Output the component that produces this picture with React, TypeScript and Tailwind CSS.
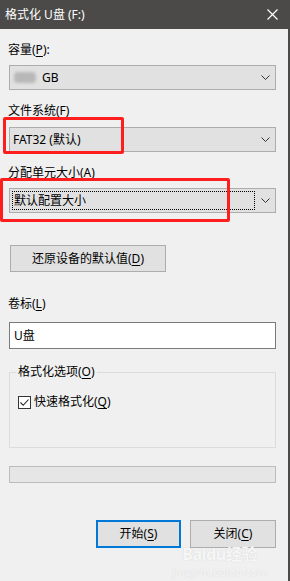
import React from "react";

const font = { fontFamily: '"Noto Sans", "Noto Sans CJK SC", sans-serif' };

function Chevron() {
  return (
    <svg width="9" height="5" viewBox="0 0 9 5" className="shrink-0">
      <path d="M0.5 0.5 L4.5 4.5 L8.5 0.5" fill="none" stroke="#333" strokeWidth="1" />
    </svg>
  );
}

function U({ children }: { children: React.ReactNode }) {
  return <span className="underline underline-offset-[2px] decoration-[1px]">{children}</span>;
}

export default function App() {
  return (
    <div className="relative w-[290px] h-[581px] bg-[#f0f0f0] text-[12px] leading-[16px] text-black overflow-hidden" style={font}>
      <div className="flex h-full">
        <div className="flex flex-col flex-1">
          {/* Title bar */}
          <div className="h-[29px] bg-[#4b4a48] flex items-center justify-between pl-[5px] pr-[10px] text-white">
            <span className="text-[12px]">格式化 U盘 (F:)</span>
            <svg width="11" height="11" viewBox="0 0 11 11">
              <path d="M0.5 0.5 L10.5 10.5 M10.5 0.5 L0.5 10.5" stroke="#fff" strokeWidth="1.2" />
            </svg>
          </div>

          <div className="flex flex-col pl-[9px] pr-[12px]">
            <div className="mt-[13px] -ml-[1px]">容量(<U>P</U>):</div>
            <div className="mt-[7px] h-[25px] bg-[#e1e1e1] border border-[#adadad] flex items-center pl-[4px] pr-[5px]">
              <span className="w-[22px] h-[11px] bg-[#b8b8b8] blur-[1.5px] rounded-sm"></span>
              <span className="ml-[6px] flex-1">GB</span>
              <Chevron />
            </div>

            <div className="mt-[13px] -ml-[1px]">文件系统(<U>F</U>)</div>
            <div className="mt-[8px] h-[25px] bg-[#e1e1e1] border border-[#adadad] flex items-center pl-[3px] pr-[5px]">
              <span className="flex-1">FAT32 (默认)</span>
              <Chevron />
            </div>

            <div className="mt-[13px] -ml-[1px]">分配单元大小(<U>A</U>)</div>
            <div className="mt-[7px] h-[25px] bg-[#e1e1e1] border border-[#adadad] flex items-center pl-[2px] pr-[5px] py-[2px]">
              <span className="flex-1 h-full border border-dotted border-black flex items-center pl-[1px] mr-[6px]">默认配置大小</span>
              <Chevron />
            </div>

            <div className="mt-[32px] ml-[1px] w-[156px] h-[27px] bg-[#e1e1e1] border border-[#adadad] flex items-center justify-center">
              还原设备的默认值(<U>D</U>)
            </div>

            <div className="mt-[24px] -ml-[1px]">卷标(<U>L</U>)</div>
            <div className="mt-[10px] h-[27px] bg-white border border-[#7a7a7a] flex items-center pl-[4px]">U盘</div>

            <div className="mt-[15px] relative h-[84px]">
              <div className="absolute left-0 right-0 top-[8px] bottom-0 border border-[#dcdcdc]"></div>
              <div className="relative flex flex-col">
                <div className="ml-[7px] px-[2px] bg-[#f0f0f0] self-start">格式化选项(<U>O</U>)</div>
                <div className="mt-[14px] ml-[9px] flex items-center gap-[3px]">
                  <span className="w-[13px] h-[13px] border border-[#333] bg-white flex items-center justify-center">
                    <svg width="11" height="11" viewBox="0 0 11 11">
                      <path d="M1.5 5.5 L4.2 8.3 L9.5 2.5" fill="none" stroke="#222" strokeWidth="1.1" />
                    </svg>
                  </span>
                  <span>快速格式化(<U>Q</U>)</span>
                </div>
              </div>
            </div>

            <div className="mt-[18px] h-[17px] bg-[#e6e6e6] border border-[#bcbcbc]"></div>

            <div className="mt-[37px] flex justify-end gap-[9px]">
              <div className="w-[85px] h-[28px] bg-[#e1e1e1] border-2 border-[#0078d7] flex items-center justify-center">开始(<U>S</U>)</div>
              <div className="w-[86px] h-[28px] bg-[#e1e1e1] border border-[#adadad] flex items-center justify-center">关闭(<U>C</U>)</div>
            </div>
          </div>
        </div>
        <div className="w-[2px] bg-[#4b4a48]"></div>
      </div>

      {/* Red annotation boxes */}
      <div className="absolute left-[3px] top-[117px] w-[121px] h-[37px] border-[3px] border-[#ff1e1e] rounded-[2px]"></div>
      <div className="absolute left-[0px] top-[178px] w-[230px] h-[44px] border-[3px] border-[#ff1e1e] rounded-[2px]"></div>

      {/* Watermark */}
      <div className="absolute left-[172px] top-[547px] flex flex-col items-center text-white/85 pointer-events-none" style={{ textShadow: "0 0 1px #c4c4c4" }}>
        <span className="text-[16px] leading-[15px] font-bold tracking-tight">Baidu经验</span>
        <span className="mt-[4px] text-[11px] leading-[12px]">jingyan.baidu.com</span>
      </div>
    </div>
  );
}
